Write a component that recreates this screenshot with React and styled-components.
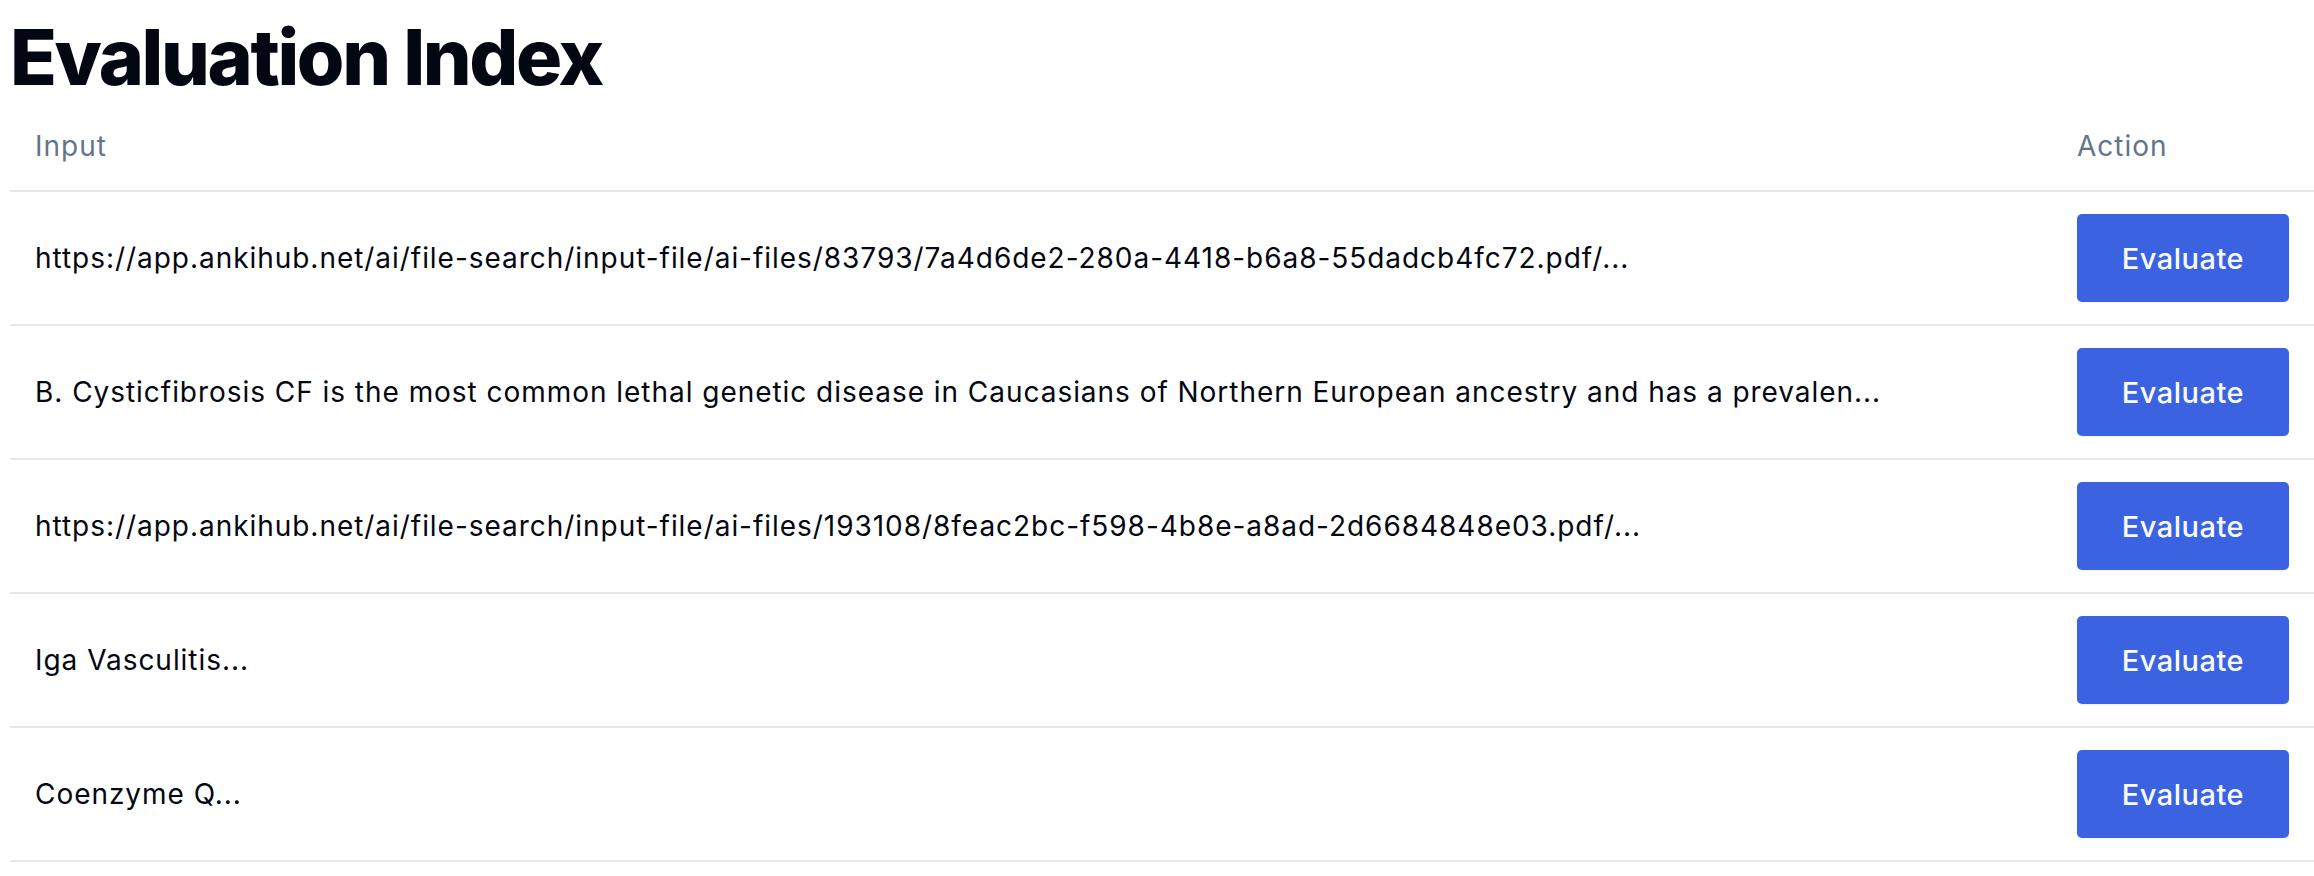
import React from "react";
import styled, { createGlobalStyle } from "styled-components";

const rows = [
  "https://app.ankihub.net/ai/file-search/input-file/ai-files/83793/7a4d6de2-280a-4418-b6a8-55dadcb4fc72.pdf/...",
  "B. Cysticfibrosis CF is the most common lethal genetic disease in Caucasians of Northern European ancestry and has a prevalen...",
  "https://app.ankihub.net/ai/file-search/input-file/ai-files/193108/8feac2bc-f598-4b8e-a8ad-2d6684848e03.pdf/...",
  "Iga Vasculitis...",
  "Coenzyme Q...",
];

const App = () => {
  return (
    <Page>
      <GlobalStyle />
      <Title>Evaluation Index</Title>
      <Table>
        <thead>
          <tr>
            <HeadCell>Input</HeadCell>
            <HeadCell $action>Action</HeadCell>
          </tr>
        </thead>
        <tbody>
          {rows.map((input, index) => (
            <tr key={index}>
              <Cell>{input}</Cell>
              <Cell $action>
                <EvaluateButton>Evaluate</EvaluateButton>
              </Cell>
            </tr>
          ))}
        </tbody>
      </Table>
    </Page>
  );
};

const GlobalStyle = createGlobalStyle`
  body {
    margin: 0;
    background: #ffffff;
    color: #030712;
    font-family: Inter, "Noto Sans", sans-serif;
  }
`;

const Page = styled.main`
  padding: 19px 0 0 10px;
`;

const Title = styled.h1`
  margin: 0 0 6px;
  font-size: 77px;
  line-height: 77px;
  font-weight: 800;
  letter-spacing: -0.031em;
  color: #030712;
`;

const Table = styled.table`
  width: 100%;
  border-collapse: separate;
  border-spacing: 0;
`;

const HeadCell = styled.th`
  height: 88px;
  padding: 0 25px;
  text-align: left;
  vertical-align: middle;
  font-size: 28px;
  font-weight: 400;
  letter-spacing: 1px;
  color: #64748b;
  border-bottom: 2px solid #e5e7eb;
  width: ${({ $action }) => ($action ? "212px" : "auto")};
`;

const Cell = styled.td`
  padding: 22px 25px;
  vertical-align: middle;
  font-size: 28px;
  letter-spacing: 0.96px;
  color: #030712;
  border-bottom: 2px solid #e5e7eb;
  white-space: nowrap;
  width: ${({ $action }) => ($action ? "212px" : "auto")};
`;

const EvaluateButton = styled.button`
  display: block;
  width: 212px;
  height: 88px;
  border: none;
  border-radius: 5px;
  background: #3b63e1;
  color: #f8fafc;
  font-family: Inter, "Noto Sans", sans-serif;
  font-size: 29px;
  font-weight: 500;
  letter-spacing: 0.5px;
  box-shadow: 0 1px 2px rgba(0, 0, 0, 0.06);
  cursor: pointer;
`;

export default App;
